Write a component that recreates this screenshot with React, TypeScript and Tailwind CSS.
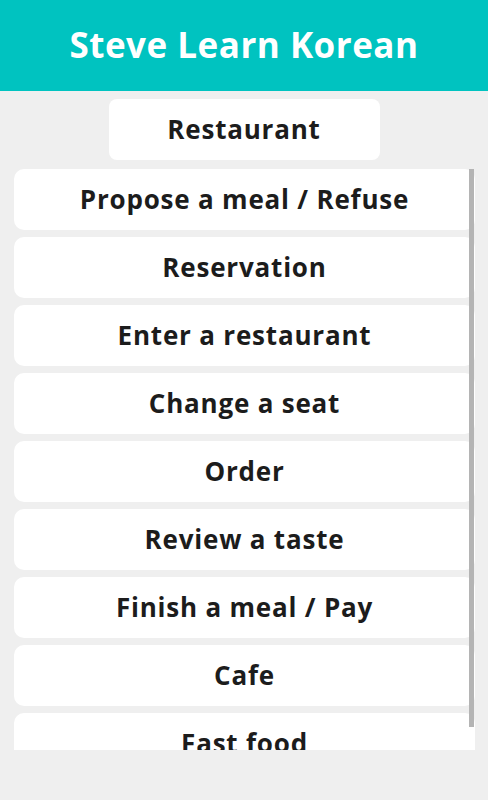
const topics = [
  "Propose a meal / Refuse",
  "Reservation",
  "Enter a restaurant",
  "Change a seat",
  "Order",
  "Review a taste",
  "Finish a meal / Pay",
  "Cafe",
  "Fast food",
];

export default function App() {
  return (
    <div
      className="flex h-[800px] w-full flex-col bg-[#efefef]"
      style={{ fontFamily: "'Open Sans', 'Noto Sans', sans-serif" }}
    >
      {/* Cabecera */}
      <header className="flex h-[91px] shrink-0 items-center justify-center bg-[#00c3c0]">
        <h1 className="text-[35px] font-bold tracking-[0.5px] text-white">Steve Learn Korean</h1>
      </header>

      {/* Categoría actual */}
      <div className="mx-auto mt-[8px] flex h-[61px] w-[271px] items-center justify-center rounded-[8px] bg-white">
        <span className="text-[26px] font-bold tracking-[0.8px] text-[#1c1c1c]">Restaurant</span>
      </div>

      {/* Lista de temas */}
      <div className="relative ml-[14px] mt-[9px] h-[581px] w-[461px] overflow-hidden">
        <ul className="flex flex-col gap-[7px]">
          {topics.map((topic) => (
            <li
              key={topic}
              className="flex h-[61px] shrink-0 items-center justify-center rounded-[10px] bg-white"
            >
              <span className="text-[26px] font-bold tracking-[0.8px] text-[#1c1c1c]">{topic}</span>
            </li>
          ))}
        </ul>
        <div className="absolute right-[1px] top-[-2px] h-[560px] w-[5px] bg-[#b4b4b4]" />
      </div>
    </div>
  );
}
